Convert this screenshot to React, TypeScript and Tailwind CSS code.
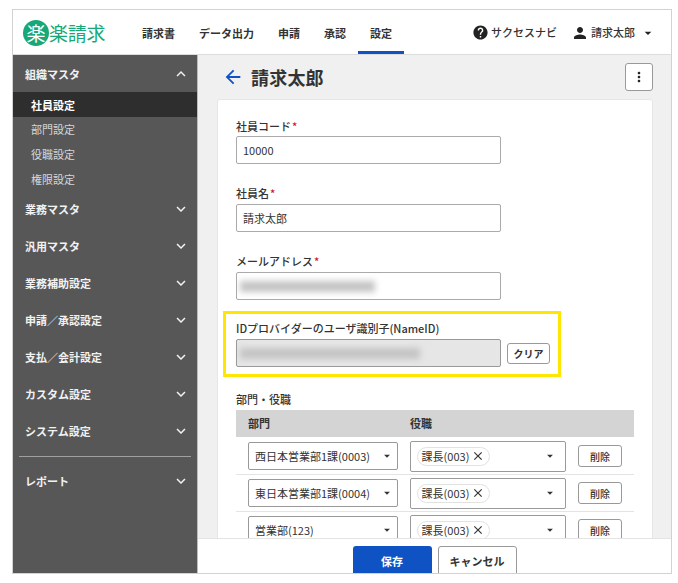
import { MdArrowBack, MdArrowDropDown, MdClose, MdExpandLess, MdExpandMore, MdHelp, MdMoreVert, MdPerson } from "react-icons/md";

const NAV = ["請求書", "データ出力", "申請", "承認", "設定"];
const SUB = ["社員設定", "部門設定", "役職設定", "権限設定"];
const GROUPS = ["業務マスタ", "汎用マスタ", "業務補助設定", "申請／承認設定", "支払／会計設定", "カスタム設定", "システム設定"];
const ROWS = ["西日本営業部1課(0003)", "東日本営業部1課(0004)", "営業部(123)"];

function Label({ text, required }: { text: string; required?: boolean }) {
  return (
    <div className="h-[17px] text-[11px] leading-[17px] font-medium text-[#333]">
      {text}
      {required && <span className="text-[#d0112b] ml-px">*</span>}
    </div>
  );
}

function SideGroup({ text }: { text: string }) {
  return (
    <div className="h-[37px] flex items-center justify-between pl-[12px] pr-[7px] text-[11px] font-bold text-[#f2f2f2]">
      <span>{text}</span>
      <MdExpandMore className="text-[18px]" />
    </div>
  );
}

function BlurredValue({ width }: { width: string }) {
  return <div className={`h-[11px] bg-[#c4c4c4] blur-[3px] ${width}`} />;
}

export default function App() {
  return (
    <div className="w-[678px] h-[583px] bg-white pt-[9px] pl-[12px] overflow-hidden font-['Noto_Sans_CJK_JP','Noto_Sans',sans-serif] text-[#333]">
      <div className="w-[660px] h-[565px] border border-[#d2d2d2] flex flex-col overflow-hidden">
        {/* Header */}
        <header className="h-[45px] shrink-0 flex items-center border-b border-[#dcdcdc] bg-white">
          <div className="w-[129px] flex items-center pl-[10px] text-[#16a878]">
            <span className="w-[26px] h-[26px] mt-[1px] rounded-full bg-[#16a878] text-white flex items-center justify-center text-[19px] leading-none">楽</span>
            <span className="text-[19px] leading-none tracking-[-0.3px] mt-[1px]">楽請求</span>
          </div>
          <nav className="flex h-full gap-[24px]">
            {NAV.map((n) => (
              <div key={n} className="relative h-full flex items-center pt-[2px] text-[11px] font-bold text-[#333]">
                {n}
                {n === "設定" && <span className="absolute left-[-12px] right-[-12px] bottom-0 h-[3px] bg-[#0f52c4]" />}
              </div>
            ))}
          </nav>
          <div className="ml-auto flex items-center text-[11px] font-medium pr-[15px] pt-[1px]">
            <MdHelp className="text-[17px] text-[#222] mr-[2px]" />
            <span>サクセスナビ</span>
            <MdPerson className="text-[18px] text-[#222] ml-[14px] mr-[2px]" />
            <span>請求太郎</span>
            <MdArrowDropDown className="text-[16px] text-[#222] ml-[5px]" />
          </div>
        </header>

        <div className="flex-1 flex min-h-0">
          {/* Sidebar */}
          <aside className="w-[185px] shrink-0 bg-[#575757] border-r border-[#bdbdbd]">
            <div className="h-[37px] flex items-center justify-between pl-[12px] pr-[7px] pt-[1px] text-[11px] font-bold text-[#f2f2f2]">
              <span>組織マスタ</span>
              <MdExpandLess className="text-[18px]" />
            </div>
            <div>
              {SUB.map((s, i) => (
                <div
                  key={s}
                  className={`h-[24.67px] flex items-center pl-[18px] pt-[1px] text-[11px] ${i === 0 ? "bg-[#2e2e2e] font-bold text-white" : "text-[#d6d6d6]"}`}
                >
                  {s}
                </div>
              ))}
            </div>
            <div>
              {GROUPS.map((g) => (
                <SideGroup key={g} text={g} />
              ))}
            </div>
            <div className="mx-[6px] my-[6px] border-t border-[#a0a0a0]" />
            <SideGroup text="レポート" />
          </aside>

          {/* Main */}
          <main className="flex-1 min-w-0 flex flex-col bg-[#f0f0f0]">
            <div className="flex-1 min-h-0 overflow-hidden pl-[19px] pr-[18px]">
              <div className="h-[44px] flex items-center">
                <MdArrowBack className="text-[22px] text-[#0f52c4] ml-[5px] mr-[7px]" />
                <h1 className="text-[18px] font-bold text-[#333] leading-none tracking-[0.2px]">請求太郎</h1>
                <button className="ml-auto w-[28px] h-[28px] mt-[-1px] bg-white border border-[#999] rounded-[3px] flex items-center justify-center">
                  <MdMoreVert className="text-[16px] text-[#222]" />
                </button>
              </div>
              <div className="bg-white border border-[#e6e6e6] rounded-[3px] px-[18px] pt-[18px] h-[600px]">
                <Label text="社員コード" required />
                <div className="mt-[1px] w-[265px] h-[28px] border border-[#aaa] rounded-[2px] flex items-center px-[6px] text-[11px]">10000</div>
                <div className="mt-[21px]">
                  <Label text="社員名" required />
                </div>
                <div className="mt-[2px] w-[265px] h-[28px] border border-[#aaa] rounded-[2px] flex items-center px-[6px] text-[11px]">請求太郎</div>
                <div className="mt-[21px]">
                  <Label text="メールアドレス" required />
                </div>
                <div className="mt-[2px] w-[265px] h-[28px] border border-[#aaa] rounded-[2px] flex items-center px-[3px] overflow-hidden">
                  <BlurredValue width="w-[135px]" />
                </div>

                {/* highlighted field */}
                <div className="mt-[11px] -ml-[13px] w-[338px] h-[66px] border-[3px] border-[#ffe600] pl-[10px] pt-[6px]">
                  <Label text="IDプロバイダーのユーザ識別子(NameID)" />
                  <div className="mt-[2px] flex items-center">
                    <div className="w-[265px] h-[28px] bg-[#e6e6e6] border border-[#999] rounded-[2px] flex items-center px-[3px] overflow-hidden">
                      <BlurredValue width="w-[180px]" />
                    </div>
                    <button className="ml-[6px] w-[43px] h-[21px] bg-white border border-[#999] rounded-[3px] text-[10px] font-bold text-[#333]">クリア</button>
                  </div>
                </div>

                <div className="mt-[14px]">
                  <Label text="部門・役職" />
                </div>
                <div className="mt-[2px] w-[398px]">
                  <div className="h-[27px] mb-[1px] bg-[#d4d4d4] flex items-center text-[11px] font-bold">
                    <span className="ml-[12px] w-[162px]">部門</span>
                    <span>役職</span>
                  </div>
                  {ROWS.map((r) => (
                    <div key={r} className="h-[37px] border-b border-[#e4e4e4] flex items-center">
                      <div className="ml-[12px] w-[150px] h-[28px] border border-[#999] rounded-[2px] flex items-center justify-between pl-[6px] pr-[3px] text-[11px]">
                        <span className="whitespace-nowrap">{r}</span>
                        <MdArrowDropDown className="text-[14px] text-[#333]" />
                      </div>
                      <div className="ml-[12px] w-[156px] h-[31px] border border-[#999] rounded-[2px] flex items-center justify-between pl-[6px] pr-[3px]">
                        <span className="h-[19px] w-[73px] rounded-full border border-[#e2e2e2] flex items-center justify-center text-[11px] whitespace-nowrap">
                          課長(003)
                          <MdClose className="text-[14px] ml-[2px] text-[#333]" />
                        </span>
                        <MdArrowDropDown className="text-[14px] text-[#333] mr-[5px]" />
                      </div>
                      <button className="ml-[12px] w-[44px] h-[22px] bg-white border border-[#999] rounded-[3px] text-[10px] font-medium text-[#333]">削除</button>
                    </div>
                  ))}
                </div>
              </div>
            </div>

            {/* Footer actions */}
            <div className="h-[35px] shrink-0 bg-white border-t border-[#e4e4e4] flex justify-center items-start gap-[6px] pt-[7px] overflow-hidden">
              <button className="w-[79px] h-[30px] shrink-0 bg-[#0f52c4] rounded-[3px] text-[11px] font-bold text-white">保存</button>
              <button className="w-[79px] h-[30px] shrink-0 bg-white border border-[#999] rounded-[3px] text-[11px] font-bold text-[#333]">キャンセル</button>
            </div>
          </main>
        </div>
      </div>
    </div>
  );
}
